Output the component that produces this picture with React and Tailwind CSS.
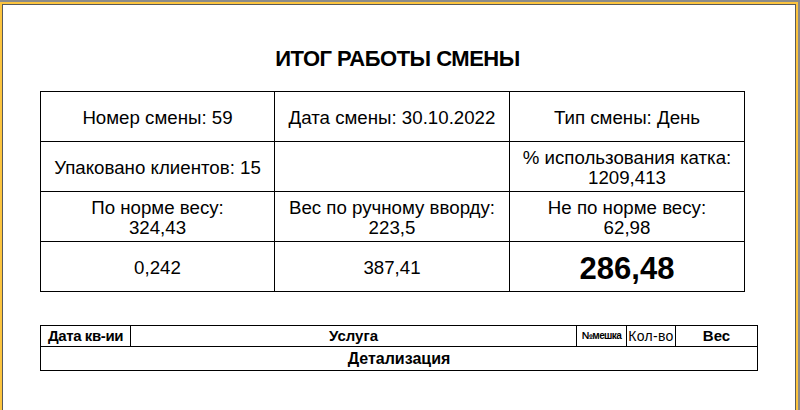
export default function App() {
  const font = { fontFamily: '"Liberation Sans", Arial, sans-serif' }

  // Верхняя таблица итогов — 4 строки по 3 ячейки
  const rows = [
    [['Номер смены: 59'], ['Дата смены: 30.10.2022'], ['Тип смены: День']],
    [['Упаковано клиентов: 15'], [], ['% использования катка:', '1209,413']],
    [['По норме весу:', '324,43'], ['Вес по ручному вворду:', '223,5'], ['Не по норме весу:', '62,98']],
    [['0,242'], ['387,41'], ['286,48']],
  ]

  return (
    <div className="w-[800px] h-[410px] overflow-hidden bg-[#8a8a8a] pt-[2px] pr-[2px]" style={font}>
      <div className="h-full bg-[#fcc43e] pt-[2px] pl-[2px] pr-[2px]">
        <div className="h-full bg-white border-t border-l border-r border-[#5a5a5a] pl-[37px] text-black">
          <h1 className="pt-[41px] pb-[19px] pr-[40px] text-center text-[22px] leading-[26px] font-bold tracking-[-0.5px]">
            ИТОГ РАБОТЫ СМЕНЫ
          </h1>

          <div className="grid grid-cols-[234px_235px_235px] w-[705px] border-t border-l border-black">
            {rows.map((row, r) =>
              row.map((lines, c) => (
                <div
                  key={r + '-' + c}
                  className="h-[50px] border-r border-b border-black flex flex-col items-center justify-center text-center"
                >
                  {r === 3 && c === 2 ? (
                    <span className="text-[31px] font-bold leading-none pt-[3px]">{lines[0]}</span>
                  ) : (
                    lines.map((t, i) => (
                      <span key={i} className="text-[18.7px] leading-[19px] pt-[1px]">{t}</span>
                    ))
                  )}
                </div>
              ))
            )}
          </div>

          {/* Детализация */}
          <div className="mt-[33px] w-[718px] border-t border-l border-black">
            <div className="flex h-[21px] text-[15px] leading-[20px] font-bold">
              <div className="w-[90px] border-r border-b border-black text-center tracking-[-0.4px]">Дата кв-ии</div>
              <div className="w-[446px] border-r border-b border-black text-center">Услуга</div>
              <div className="w-[50px] border-r border-b border-black text-center text-[10px] tracking-[-0.6px]">№мешка</div>
              <div className="w-[49px] border-r border-b border-black text-center font-normal text-[14px] tracking-[0.3px]">Кол-во</div>
              <div className="w-[82px] border-r border-b border-black text-center">Вес</div>
            </div>
            <div className="h-[24px] border-r border-b border-black text-center text-[16px] leading-[23px] font-bold">
              Детализация
            </div>
          </div>
        </div>
      </div>
    </div>
  )
}
